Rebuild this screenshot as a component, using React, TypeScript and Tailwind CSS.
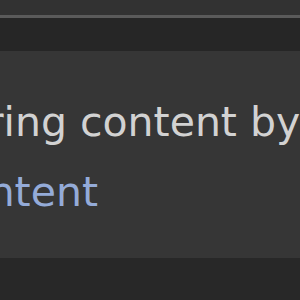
export default function App() {
  return (
    <div className="w-[300px] h-[300px] overflow-hidden bg-[#282828] flex flex-col" style={{ fontFamily: '"DejaVu Sans", sans-serif' }}>
      <div className="h-[15px] bg-[#323232]" />
      <div className="h-[3px] bg-[#5a5a5a]" />
      <div className="h-[33px] bg-[#262626]" />
      <div className="h-[207px] bg-[#363636] overflow-hidden">
        <p className="whitespace-nowrap text-[41px] leading-[70px] text-[#d2d2d2] mt-[36px] ml-[-98px]">
          Filtering content by
        </p>
        <a className="block whitespace-nowrap text-[41px] leading-[70px] text-[#94abd8] ml-[-59px]">
          content
        </a>
      </div>
      <div className="flex-1 bg-[#282828]" />
    </div>
  );
}
